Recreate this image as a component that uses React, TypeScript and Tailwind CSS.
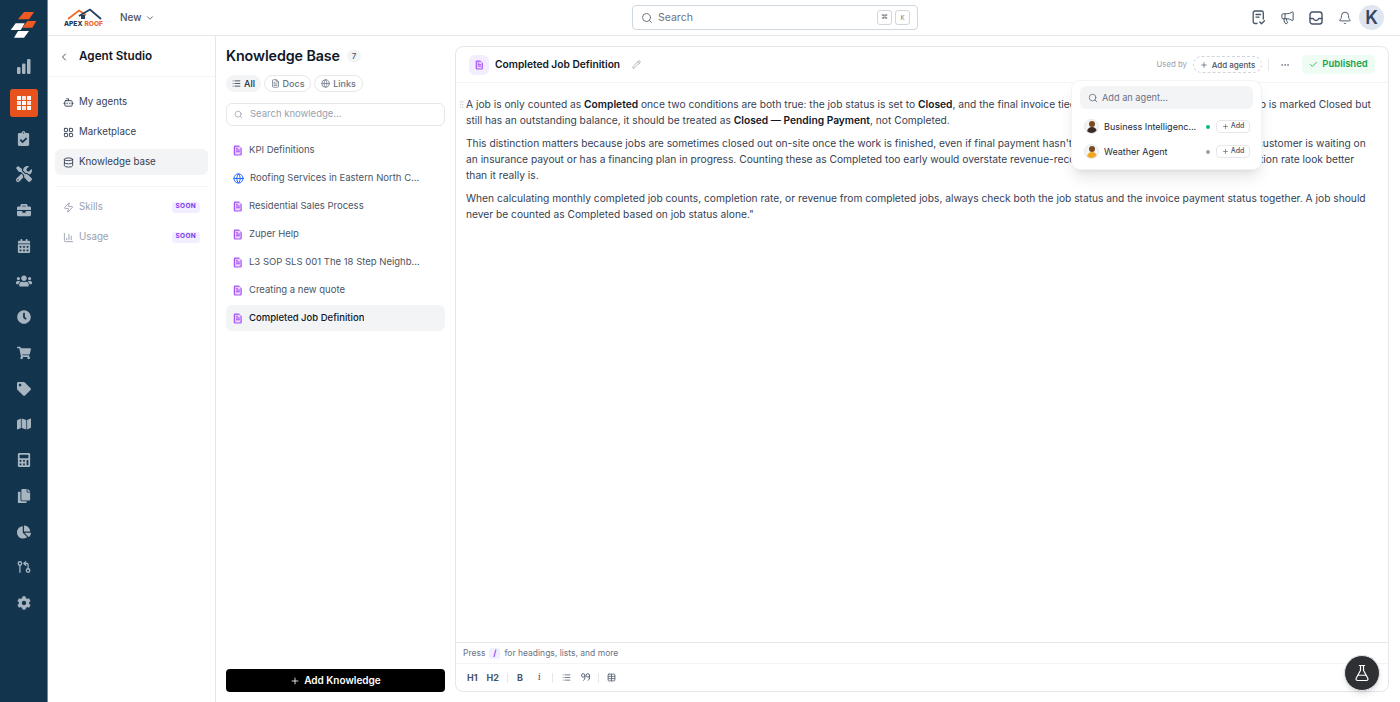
import type { ReactNode } from "react";
import {
  Bell,
  Bot,
  Check,
  ChartColumn,
  ChevronDown,
  ChevronLeft,
  Database,
  Ellipsis,
  FileText,
  FlaskConical,
  Globe,
  GitPullRequestArrow,
  GripVertical,
  LayoutGrid,
  List,
  Megaphone,
  Pencil,
  Plus,
  Search,
  Table,
  Zap,
} from "lucide-react";
import {
  FaBriefcase,
  FaCalculator,
  FaCalendarAlt,
  FaChartPie,
  FaClipboardCheck,
  FaClock,
  FaCog,
  FaCopy,
  FaMap,
  FaShoppingCart,
  FaTag,
  FaTools,
  FaUsers,
} from "react-icons/fa";

const font = { fontFamily: "Inter, sans-serif" };

const gridTiles = [1, 0.85, 1, 0.85, 1, 0.85, 1, 0.85, 1];

const railIcons: { icon: ReactNode; active?: boolean }[] = [
  {
    icon: (
      <svg width="14" height="15" viewBox="0 0 14 15" fill="currentColor">
        <rect x="0" y="8" width="3.500" height="7" rx="1.200" />
        <rect x="5" y="4.500" width="3.500" height="10.500" rx="1.200" />
        <rect x="10" y="0" width="3.500" height="15" rx="1.200" />
      </svg>
    ),
  },
  {
    icon: (
      <span className="grid grid-cols-3 gap-[1px]">
        {gridTiles.map((o, i) => (
          <span key={i} className="w-[4px] h-[4px] bg-white" style={{ opacity: o }} />
        ))}
      </span>
    ),
    active: true,
  },
  { icon: <FaClipboardCheck size={15} /> },
  { icon: <FaTools size={16} /> },
  { icon: <FaBriefcase size={14} /> },
  { icon: <FaCalendarAlt size={14} /> },
  { icon: <FaUsers size={16} /> },
  { icon: <FaClock size={14} /> },
  { icon: <FaShoppingCart size={14} /> },
  { icon: <FaTag size={14} /> },
  { icon: <FaMap size={14} /> },
  { icon: <FaCalculator size={14} /> },
  { icon: <FaCopy size={14} /> },
  { icon: <FaChartPie size={14} /> },
  { icon: <GitPullRequestArrow size={14} strokeWidth={2.2} /> },
  { icon: <FaCog size={14} /> },
];

const knowledge = [
  { name: "KPI Definitions", web: false },
  { name: "Roofing Services in Eastern North C...", web: true },
  { name: "Residential Sales Process", web: false },
  { name: "Zuper Help", web: false },
  { name: "L3 SOP SLS 001 The 18 Step Neighb...", web: false },
  { name: "Creating a new quote", web: false },
  { name: "Completed Job Definition", web: false, active: true },
];

function DocIcon({ size = 11 }: { size?: number }) {
  return (
    <svg width={size} height={size + 1} viewBox="0 0 12 13" className="shrink-0">
      <path d="M2.500 .5h4.600L10.500 3.900v7a1.600 1.600 0 0 1-1.600 1.600H2.500A1.600 1.600 0 0 1 .9 10.900V2.100A1.600 1.600 0 0 1 2.500 .5z" fill="#a855f7" />
      <rect x="2.500" y="2" width="6.500" height="9.200" rx=".6" fill="#e9d5ff" />
      <path d="M3.700 6h4.500M3.700 8h4.500M3.700 4h2" stroke="#9333ea" strokeWidth="1" />
    </svg>
  );
}

function ApexLogo() {
  return (
    <svg width="42" height="22" viewBox="0 0 42 22">
      <path d="M5 12 L16 3.500 L23 8" fill="none" stroke="#f0681f" strokeWidth="1.600" />
      <path d="M16 9 L27 2.500 L38 12" fill="none" stroke="#24405f" strokeWidth="1.800" />
      <rect x="18" y="8" width="4" height="4" fill="#24405f" />
      <text x="1" y="18.500" fontSize="6.600" fontWeight="800" fill="#1d3557" fontFamily="Inter, sans-serif">APEX</text>
      <text x="21.500" y="18.500" fontSize="6.600" fontWeight="800" fill="#f0681f" fontFamily="Inter, sans-serif">ROOF</text>
    </svg>
  );
}

function AgentAvatar({ tone }: { tone: string }) {
  return (
    <span className="w-[15px] h-[15px] rounded-full bg-gray-100 overflow-hidden shrink-0 relative border border-gray-200">
      <span className="absolute left-[4px] top-[1px] w-[6px] h-[6px] rounded-full bg-[#7c4a21]" />
      <span className={`absolute left-[2px] top-[7px] w-[10px] h-[8px] rounded-t-full ${tone}`} />
    </span>
  );
}

export default function App() {
  return (
    <div className="flex h-screen w-full overflow-hidden bg-white text-gray-900" style={font}>
      {/* Left rail */}
      <aside className="w-[48px] shrink-0 bg-[#12344d] border-r border-[#6f8ba3] flex flex-col items-center text-[#a7b5c1]">
        <div className="h-[49px] w-full flex items-start justify-center pt-[11px]">
          <svg width="28" height="28" viewBox="10 11 28 28">
            <path d="M24 12h10l-5 7.300H18z" fill="#ef5a24" />
            <path d="M27.300 21h9l-4 6.700H22.300z" fill="#ef5a24" />
            <path d="M15.700 23.300h9l-4 6.700H10.700z" fill="#ffffff" />
            <path d="M18 31h11l-5 6.700H14z" fill="#ffffff" />
          </svg>
        </div>
        {railIcons.map((item, i) => (
          <div key={i} className="h-[35.75px] w-full flex items-center justify-center shrink-0">
            {item.active ? (
              <div className="w-[28px] h-[28px] rounded-[3px] bg-[#e8521d] flex items-center justify-center">{item.icon}</div>
            ) : (
              item.icon
            )}
          </div>
        ))}
      </aside>

      <div className="flex-1 min-w-0 flex flex-col">
        {/* Top header */}
        <header className="h-[36px] shrink-0 border-b border-gray-200 flex items-center relative">
          <div className="w-[72px] pl-[15px] flex items-center">
            <ApexLogo />
          </div>
          <span className="text-[10px] font-medium text-gray-600">New</span>
          <ChevronDown size={10} className="ml-[3px] text-gray-600" />
          <div className="absolute left-[584px] top-[5px] w-[286px] h-[25px] rounded-[4px] border border-[#cfd7df] flex items-center pl-[8px] pr-[7px]">
            <Search size={12} className="text-gray-500" />
            <span className="ml-[5px] text-[10.500px] text-gray-500 flex-1">Search</span>
            <span className="w-[15px] h-[15px] rounded-[3px] border border-gray-300 flex items-center justify-center text-[7px] text-gray-500">⌘</span>
            <span className="w-[15px] h-[15px] ml-[3px] rounded-[3px] border border-gray-300 flex items-center justify-center text-[6px] text-gray-500">K</span>
          </div>
          <div className="ml-auto flex items-center pr-[16px] text-[#475569]">
            <svg width="14" height="15" viewBox="0 0 14 15" fill="none" stroke="currentColor" strokeWidth="1.300" strokeLinecap="round" strokeLinejoin="round">
              <path d="M5 13.500H3a1.800 1.800 0 0 1-1.800-1.800V2.800A1.800 1.800 0 0 1 3 1h6.500a1.800 1.800 0 0 1 1.800 1.800V9" />
              <path d="M4 4.500h4.500M4 7.200h3M7.800 12l1.700 1.700 3-3" />
            </svg>
            <Megaphone size={15} strokeWidth={1.6} className="ml-[14px]" />
            <svg width="14" height="14" viewBox="0 0 14 14" fill="none" stroke="currentColor" strokeWidth="1.400" strokeLinecap="round" strokeLinejoin="round" className="ml-[14px]">
              <rect x="1" y="1" width="12" height="12" rx="2.500" />
              <path d="M1 7.500h3.200c.5 1.400 1.500 2 2.800 2s2.300-.6 2.800-2H13" />
            </svg>
            <Bell size={14} strokeWidth={1.6} className="ml-[15px]" />
            <div className="ml-[7px] w-[25px] h-[25px] rounded-full bg-[#dfe6ef] flex items-center justify-center text-[18px] font-semibold text-[#344563]">K</div>
          </div>
        </header>

        <div className="flex-1 min-h-0 flex">
          {/* Studio nav */}
          <nav className="w-[168px] shrink-0 border-r border-gray-200 flex flex-col">
            <div className="h-[41px] border-b border-gray-100 flex items-center pl-[10px] pt-[1px] shrink-0">
              <ChevronLeft size={12} className="text-gray-600" />
              <span className="ml-[9px] text-[11.700px] font-semibold text-gray-900">Agent Studio</span>
            </div>
            <div className="px-[7px] pt-[12px] flex flex-col">
              <NavRow icon={<Bot size={11} />} label="My agents" />
              <NavRow icon={<LayoutGrid size={11} />} label="Marketplace" />
              <NavRow icon={<Database size={11} />} label="Knowledge base" active />
              <div className="h-px bg-gray-100 my-[7px]" />
              <NavRow icon={<Zap size={11} />} label="Skills" soon />
              <NavRow icon={<ChartColumn size={11} />} label="Usage" soon />
            </div>
          </nav>

          {/* Knowledge list */}
          <section className="w-[239px] shrink-0 flex flex-col px-[10px] pb-[10px]">
            <div className="flex items-center pt-[10px] h-[30px]">
              <h1 className="text-[14.300px] font-semibold text-gray-900 tracking-[-0.1px]">Knowledge Base</h1>
              <span className="ml-[7px] w-[14px] h-[12px] rounded-full bg-gray-100 text-[8px] font-medium text-gray-600 flex items-center justify-center">7</span>
            </div>
            <div className="flex items-center gap-[3px] mt-[9px]">
              <span className="h-[17px] w-[35px] justify-center rounded-full bg-gray-100 flex items-center gap-[3px] text-[9px] font-medium text-gray-800"><List size={9} />All</span>
              <span className="h-[17px] w-[47px] justify-center rounded-full border border-gray-200 flex items-center gap-[3px] text-[9px] font-medium text-gray-500"><FileText size={9} />Docs</span>
              <span className="h-[17px] w-[49px] justify-center rounded-full border border-gray-200 flex items-center gap-[3px] text-[9px] font-medium text-gray-500"><Globe size={9} />Links</span>
            </div>
            <div className="mt-[11px] h-[23px] rounded-[6px] border border-gray-200 flex items-center pl-[7px]">
              <Search size={9} className="text-gray-400" />
              <span className="ml-[7px] text-[9.500px] text-gray-400">Search knowledge...</span>
            </div>
            <div className="mt-[11px] flex flex-col gap-[2px]">
              {knowledge.map((k) => (
                <div key={k.name} className={`h-[26px] rounded-[6px] flex items-center pl-[7px] ${k.active ? "bg-gray-100" : ""}`}>
                  {k.web ? <Globe size={11} className="text-blue-600 shrink-0" /> : <DocIcon size={10} />}
                  <span className={`ml-[6px] text-[9.500px] truncate ${k.active ? "font-medium text-gray-900" : "text-gray-600"}`}>{k.name}</span>
                </div>
              ))}
            </div>
            <button className="mt-auto h-[23px] rounded-[4px] bg-black text-white text-[10px] font-semibold flex items-center justify-center gap-[4px]">
              <Plus size={10} />Add Knowledge
            </button>
          </section>

          {/* Editor */}
          <main className="flex-1 min-w-0 pt-[10px] pr-[11px] pb-[10px]">
            <div className="h-full rounded-[8px] border border-gray-200 flex flex-col relative">
              <div className="h-[36px] shrink-0 border-b border-gray-100 flex items-center pl-[13px] pr-[13px]">
                <span className="w-[20px] h-[20px] rounded-[6px] bg-[#f3eeff] flex items-center justify-center"><DocIcon size={9} /></span>
                <span className="ml-[6px] text-[10.200px] font-semibold text-gray-900">Completed Job Definition</span>
                <Pencil size={9} className="ml-[12px] text-gray-400" />
                <span className="ml-auto text-[7.800px] text-gray-400">Used by</span>
                <span className="ml-[6px] h-[17px] w-[69px] rounded-full border border-dashed border-gray-300 flex items-center justify-center gap-[4px] text-[8px] font-medium text-gray-600"><Plus size={8} />Add agents</span>
                <span className="ml-[6px] h-[12px] w-px bg-gray-200" />
                <Ellipsis size={10} className="ml-[11px] text-gray-500" />
                <span className="ml-[12px] h-[19px] w-[73px] rounded-[5px] bg-[#eefcf3] flex items-center justify-center gap-[4px] text-[9.500px] font-semibold text-[#16a34a]"><Check size={9} />Published</span>
              </div>
              <div className="flex-1 min-h-0 pl-[10px] pr-[16px] pt-[13px] text-[10.220px] leading-[16px] text-gray-700 relative">
                <GripVertical size={9} className="absolute left-[1px] top-[17px] text-gray-300" />
                <p className="mb-[7px]">
                  A job is only counted as <b className="font-semibold text-gray-900">Completed</b> once two conditions are both true: the job status is set to <b className="font-semibold text-gray-900">Closed</b>, and the final invoice tied to that job has been paid in full. If a job is marked Closed but still has an outstanding balance, it should be treated as <b className="font-semibold text-gray-900">Closed — Pending Payment</b>, not Completed.
                </p>
                <p className="mb-[7px]">
                  This distinction matters because jobs are sometimes closed out on-site once the work is finished, even if final payment hasn't been received, for example when the customer is waiting on an insurance payout or has a financing plan in progress. Counting these as Completed too early would overstate revenue-recognition numbers and make the completion rate look better than it really is.
                </p>
                <p>
                  When calculating monthly completed job counts, completion rate, or revenue from completed jobs, always check both the job status and the invoice payment status together. A job should never be counted as Completed based on job status alone."
                </p>
              </div>
              <div className="h-[21px] shrink-0 border-t border-gray-200 flex items-center pl-[7px] text-[8.500px] text-gray-500">
                Press
                <span className="mx-[4px] w-[11px] h-[11px] rounded-[3px] bg-[#f3eeff] text-[#7c3aed] flex items-center justify-center font-semibold">/</span>
                for headings, lists, and more
              </div>
              <div className="h-[28px] shrink-0 border-t border-gray-100 flex items-center pl-[11px] text-[#475569]">
                <span className="text-[9px] font-bold">H1</span>
                <span className="ml-[9px] text-[9px] font-bold">H2</span>
                <span className="ml-[8px] h-[10px] w-px bg-gray-200" />
                <span className="ml-[9px] text-[9px] font-bold">B</span>
                <span className="ml-[15px] text-[10px] italic font-serif">i</span>
                <span className="ml-[11px] h-[10px] w-px bg-gray-200" />
                <List size={9} className="ml-[9px]" />
                <svg width="9" height="9" viewBox="0 0 9 9" fill="none" stroke="currentColor" strokeWidth="0.9" className="ml-[10px]">
                  <circle cx="2.200" cy="2.400" r="1.700" />
                  <circle cx="6.800" cy="2.400" r="1.700" />
                  <path d="M3.900 2.400v1.800a3 3 0 0 1-1.700 3.300M8.500 2.400v1.800a3 3 0 0 1-1.700 3.300" />
                </svg>
                <span className="ml-[8px] h-[10px] w-px bg-gray-200" />
                <Table size={9} className="ml-[8px]" />
              </div>

              {/* Add agent popup */}
              <div className="absolute left-[615px] top-[33px] w-[191px] h-[90px] rounded-[9px] border border-gray-100 bg-white shadow-lg px-[8px] pt-[5px]">
                <div className="h-[23px] rounded-[6px] bg-gray-100 flex items-center pl-[8px]">
                  <Search size={10} className="text-gray-500" />
                  <span className="ml-[4px] text-[9.200px] text-gray-500">Add an agent...</span>
                </div>
                <div className="flex items-center h-[25px] mt-[5px] pl-[4px]">
                  <AgentAvatar tone="bg-[#3b2a24]" />
                  <span className="ml-[5px] text-[9px] text-gray-800 w-[92px] whitespace-nowrap">Business Intelligenc...</span>
                  <span className="ml-[10px] w-[4px] h-[4px] rounded-full bg-emerald-500" />
                  <AddChip />
                </div>
                <div className="flex items-center h-[25px] pl-[4px]">
                  <AgentAvatar tone="bg-[#f0a820]" />
                  <span className="ml-[5px] text-[9px] text-gray-800 w-[92px] whitespace-nowrap">Weather Agent</span>
                  <span className="ml-[10px] w-[4px] h-[4px] rounded-full bg-gray-400" />
                  <AddChip />
                </div>
              </div>
            </div>
          </main>
        </div>
      </div>

      {/* Floating lab button */}
      <button className="absolute left-[1344px] top-[655px] w-[36px] h-[36px] rounded-full bg-[#2f3033] border border-gray-200 flex items-center justify-center text-white shadow-md">
        <FlaskConical size={18} strokeWidth={1.6} />
      </button>
    </div>
  );
}

function AddChip() {
  return (
    <span className="ml-[6px] h-[13px] w-[34px] rounded-[4px] border border-gray-200 flex items-center justify-center gap-[2px] text-[7px] font-medium text-gray-600">
      <Plus size={7} />Add
    </span>
  );
}

function NavRow({ icon, label, active, soon }: { icon: ReactNode; label: string; active?: boolean; soon?: boolean }) {
  return (
    <div className={`h-[26px] mb-[4px] rounded-[6px] flex items-center pl-[8px] pr-[8px] ${active ? "bg-gray-100" : ""} ${soon ? "text-gray-400" : "text-gray-700"}`}>
      {icon}
      <span className="ml-[5px] text-[9.750px]">{label}</span>
      {soon && <span className="ml-auto h-[11px] px-[4px] rounded-[3px] bg-[#f3eeff] text-[#7c3aed] text-[6.500px] font-bold flex items-center tracking-[0.3px]">SOON</span>}
    </div>
  );
}
